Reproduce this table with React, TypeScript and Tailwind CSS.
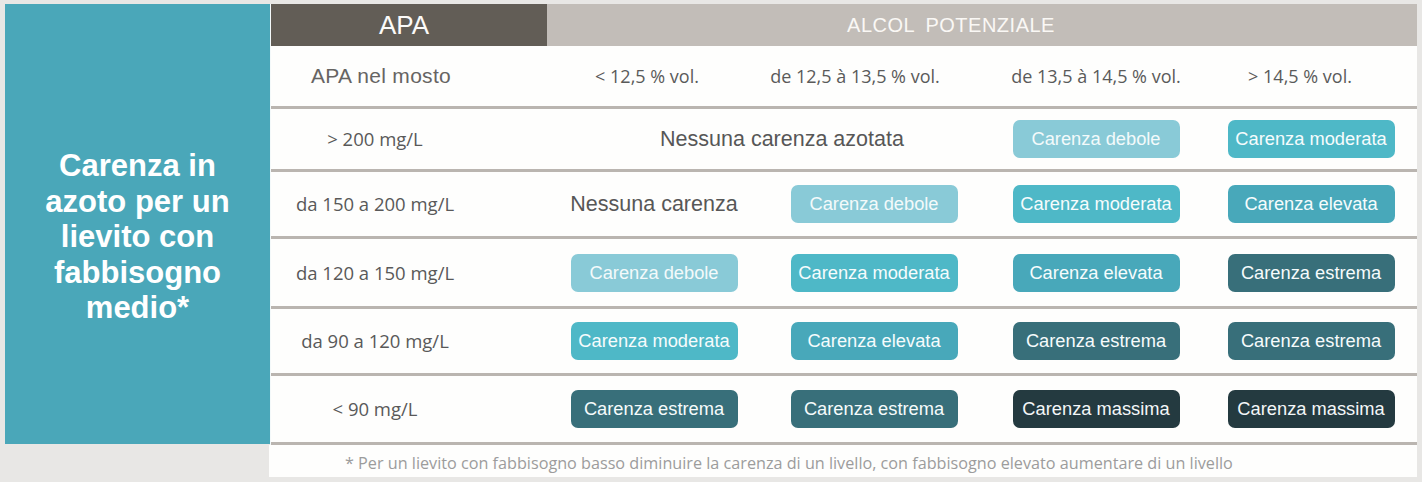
import React from "react";

type Level = "debole" | "moderata" | "elevata" | "estrema" | "massima";

const levelClass: Record<Level, string> = {
  debole: "bg-[#89cad7] text-[#f3fafb]",
  moderata: "bg-[#4eb8c7] text-[#f6fcfd]",
  elevata: "bg-[#48a8ba] text-[#f6fcfd]",
  estrema: "bg-[#386f7a] text-[#f6fbfc]",
  massima: "bg-[#243a40] text-[#f4f7f8]",
};

const levelLabel: Record<Level, string> = {
  debole: "Carenza debole",
  moderata: "Carenza moderata",
  elevata: "Carenza elevata",
  estrema: "Carenza estrema",
  massima: "Carenza massima",
};

function Badge({ level }: { level: Level }) {
  return (
    <div className="flex justify-center">
      <div
        className={`flex h-[38px] w-[167px] items-center justify-center rounded-[7px] font-['Liberation_Sans',Arial,sans-serif] text-[18.3px] ${levelClass[level]}`}
      >
        {levelLabel[level]}
      </div>
    </div>
  );
}

const gridCols = "grid grid-cols-[276px_214px_226px_218px_1fr] items-center";
const rowLine = "border-b-[3px] border-[#bab5b0]";

function ApaCell({ children }: { children: React.ReactNode }) {
  return (
    <div className="pr-[68px] text-center font-['Open_Sans','Noto_Sans',sans-serif] text-[18.5px] text-[#595959]">
      {children}
    </div>
  );
}

function VolCell({ children, pad }: { children: React.ReactNode; pad: string }) {
  return (
    <div className={`text-center font-['Open_Sans','Noto_Sans',sans-serif] text-[18px] text-[#5a5a5a] ${pad}`}>
      {children}
    </div>
  );
}

export default function App() {
  return (
    <div className="h-[482px] w-[1422px] overflow-hidden bg-[#e8e7e5] pl-[5px] pt-[4px]">
      <div className="flex">
        {/* Left teal panel */}
        <div className="h-[440px] w-[265px] bg-[#4aa7b9] pt-[144px] text-center font-['Liberation_Sans',Arial,sans-serif] text-[31px] font-bold leading-[35.5px] text-white">
          Carenza in
          <br />
          azoto per un
          <br />
          lievito con
          <br />
          fabbisogno
          <br />
          medio*
        </div>

        {/* Table */}
        <div className="w-[1147px] border-l border-[#f4f9fa] bg-[#fefefd]">
          {/* Header */}
          <div className="flex h-[42px]">
            <div className="flex w-[276px] items-center justify-center bg-[#625d56] pr-[10px] font-['Liberation_Sans',Arial,sans-serif] text-[26px] text-[#fbfaf8]">
              APA
            </div>
            <div className="flex flex-1 items-center justify-center bg-[#c2bdb8] pr-[62px] font-['Liberation_Sans',Arial,sans-serif] text-[20px] tracking-[0.5px] text-[#faf8f5] [word-spacing:5px]">
              ALCOL POTENZIALE
            </div>
          </div>

          {/* Sub header */}
          <div className={`${gridCols} ${rowLine} h-[63px]`}>
            <div className="pr-[56px] text-center font-['Liberation_Sans',Arial,sans-serif] text-[21px] tracking-[0.3px] text-[#666463]">
              APA nel mosto
            </div>
            <VolCell pad="pr-[14px]">&lt; 12,5 % vol.</VolCell>
            <VolCell pad="pr-[38px]">de 12,5 à 13,5 % vol.</VolCell>
            <VolCell pad="pr-0">de 13,5 à 14,5 % vol.</VolCell>
            <VolCell pad="pr-[22px]">&gt; 14,5 % vol.</VolCell>
          </div>

          {/* Row 1 */}
          <div className={`${gridCols} ${rowLine} h-[63px]`}>
            <ApaCell>&gt; 200 mg/L</ApaCell>
            <div className="col-span-2 pl-[30px] text-center font-['Liberation_Sans',Arial,sans-serif] text-[21.5px] text-[#575757]">
              Nessuna carenza azotata
            </div>
            <Badge level="debole" />
            <Badge level="moderata" />
          </div>

          {/* Row 2 */}
          <div className={`${gridCols} ${rowLine} h-[67px]`}>
            <ApaCell>da 150 a 200 mg/L</ApaCell>
            <div className="text-center font-['Liberation_Sans',Arial,sans-serif] text-[21.5px] text-[#575757]">
              Nessuna carenza
            </div>
            <Badge level="debole" />
            <Badge level="moderata" />
            <Badge level="elevata" />
          </div>

          {/* Row 3 */}
          <div className={`${gridCols} ${rowLine} h-[70px]`}>
            <ApaCell>da 120 a 150 mg/L</ApaCell>
            <Badge level="debole" />
            <Badge level="moderata" />
            <Badge level="elevata" />
            <Badge level="estrema" />
          </div>

          {/* Row 4 */}
          <div className={`${gridCols} ${rowLine} h-[67px]`}>
            <ApaCell>da 90 a 120 mg/L</ApaCell>
            <Badge level="moderata" />
            <Badge level="elevata" />
            <Badge level="estrema" />
            <Badge level="estrema" />
          </div>

          {/* Row 5 */}
          <div className={`${gridCols} ${rowLine} h-[69px]`}>
            <ApaCell>&lt; 90 mg/L</ApaCell>
            <Badge level="estrema" />
            <Badge level="estrema" />
            <Badge level="massima" />
            <Badge level="massima" />
          </div>
        </div>
      </div>

      {/* Footer note */}
      <div className="ml-[264px] flex h-[32px] w-[1148px] items-center bg-[#fefefd] pl-[76px] pt-[5px] font-['Open_Sans','Noto_Sans',sans-serif] text-[16.2px] text-[#9c9c9c]">
        * Per un lievito con fabbisogno basso diminuire la carenza di un livello, con fabbisogno elevato aumentare di un livello
      </div>
    </div>
  );
}
